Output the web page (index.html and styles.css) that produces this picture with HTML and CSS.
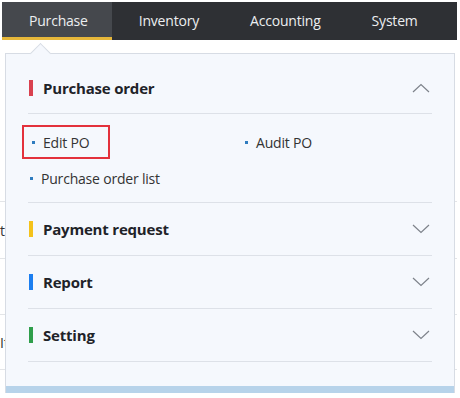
FILE: index.html
```html
<!DOCTYPE html>
<html lang="en">
<head>
<meta charset="utf-8">
<title>Menu</title>
<link rel="stylesheet" href="styles.css">
</head>
<body>
<nav class="nav">
  <a class="tab active">Purchase</a>
  <a class="tab">Inventory</a>
  <a class="tab">Accounting</a>
  <a class="tab">System</a>
</nav>
<main class="page">
  <div class="row row-a"></div>
  <div class="row row-b">test</div>
  <div class="row row-c"></div>
  <div class="row row-d">Item</div>
</main>

<div class="dropdown">
  <span class="caret"></span>
  <section class="group open">
    <header class="group-head">
      <span class="mark red"></span>
      <h3>Purchase order</h3>
      <svg class="chev" viewBox="0 0 18 10" width="18" height="10"><path d="M1 9 L9 1.5 L17 9" fill="none" stroke="#7d828a" stroke-width="1.2"/></svg>
    </header>
    <ul class="items">
      <li class="item"><span class="hl"><i class="dot"></i>Edit PO</span></li>
      <li class="item"><i class="dot"></i>Audit PO</li>
      <li class="item"><i class="dot"></i>Purchase order list</li>
    </ul>
  </section>
  <section class="group">
    <header class="group-head">
      <span class="mark yellow"></span>
      <h3>Payment request</h3>
      <svg class="chev" viewBox="0 0 18 10" width="18" height="10"><path d="M1 1 L9 8.5 L17 1" fill="none" stroke="#7d828a" stroke-width="1.2"/></svg>
    </header>
  </section>
  <section class="group">
    <header class="group-head">
      <span class="mark blue"></span>
      <h3>Report</h3>
      <svg class="chev" viewBox="0 0 18 10" width="18" height="10"><path d="M1 1 L9 8.5 L17 1" fill="none" stroke="#7d828a" stroke-width="1.2"/></svg>
    </header>
  </section>
  <section class="group">
    <header class="group-head">
      <span class="mark green"></span>
      <h3>Setting</h3>
      <svg class="chev" viewBox="0 0 18 10" width="18" height="10"><path d="M1 1 L9 8.5 L17 1" fill="none" stroke="#7d828a" stroke-width="1.2"/></svg>
    </header>
  </section>
  <div class="foot"></div>
</div>
</body>
</html>
```

FILE: styles.css
```css
* { box-sizing: border-box; }
html, body { margin: 0; padding: 0; }
body {
  background: #ffffff;
  font-family: "Open Sans", "Noto Sans", sans-serif;
  color: #333;
  width: 460px;
  height: 398px;
  overflow: hidden;
  position: relative;
  padding: 2px 3px 0 2px;
}
.nav {
  display: flex;
  height: 38px;
  background: #2e3034;
}
.tab {
  display: flex;
  align-items: center;
  padding: 0 26px 0 27px;
  color: #eceef0;
  font-size: 14px;
  letter-spacing: -0.2px;
  border-bottom: 3px solid transparent;
  padding-top: 2px;
}
.tab.active {
  background: #45484d;
  border-bottom-color: #e6b73a;
  padding-right: 24px;
}
.tab:nth-child(3) { padding-left: 25px; padding-right: 24px; }

.page {
  font-size: 14px;
  color: #333;
}
.row { height: 55px; border-bottom: 1px solid #e3e5e8; display: flex; align-items: center; margin-left: -2px; }
.row-a { height: 162px; }
.row-b { height: 57px; }
.row-c { height: 56px; }

.dropdown {
  position: absolute;
  left: 5px;
  top: 53px;
  width: 450px;
  height: 340px;
  background: #f5f8fd;
  border: 1px solid #d7dce4;
  border-bottom: none;
  padding: 8px 22px 0 22px;
  display: flex;
  flex-direction: column;
}
.caret {
  position: absolute;
  left: 27px;
  top: -8px;
  width: 15px;
  height: 15px;
  background: #f5f8fd;
  border-left: 1px solid #d7dce4;
  border-top: 1px solid #d7dce4;
  transform: rotate(45deg);
}
.group { border-bottom: 1px solid #dde1e8; }
.group-head {
  height: 52px;
  display: flex;
  align-items: center;
  padding-left: 1px;
}
.mark { width: 4px; height: 16px; margin-right: 10px; }
.red { background: #d9414f; }
.yellow { background: #f4c21b; }
.blue { background: #1b7ef0; }
.green { background: #2f9e4b; }
.group-head h3 {
  margin: 0;
  font-size: 15px;
  font-weight: 700;
  color: #1f2329;
  flex: 1;
  letter-spacing: -0.2px;
}
.chev { margin-right: 2px; }

.group.open { border-bottom: none; }
.group.open .group-head { border-bottom: 1px solid #dde1e8; }
.items {
  list-style: none;
  margin: 0;
  padding: 10px 0 6px 0;
  display: grid;
  grid-template-columns: 215px 1fr;
  grid-auto-rows: 36px;
  border-bottom: 1px solid #dde1e8;
}
.item {
  display: flex;
  align-items: center;
  font-size: 14px;
  color: #333;
  letter-spacing: -0.2px;
}
.item .hl {
  display: flex;
  align-items: center;
  border: 2px solid #e3313c;
  height: 34px;
  padding: 0 19px 0 6px;
  margin-left: -6px;
}
.dot {
  display: inline-block;
  width: 3px;
  height: 3px;
  background: #2f7cbf;
  margin: 0 8px 0 2px;
}
.foot {
  margin-top: auto;
  margin-left: -22px;
  margin-right: -22px;
  height: 7px;
  background: #b7d3ea;
}
```
